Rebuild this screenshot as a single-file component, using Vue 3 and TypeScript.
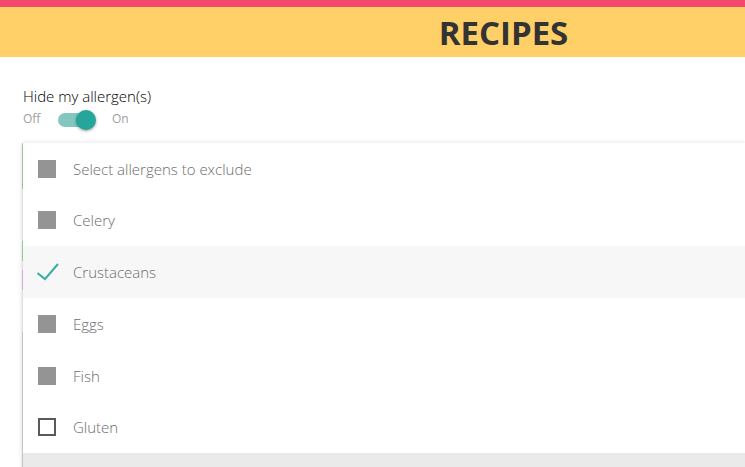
<script setup lang="ts">
import { ref } from 'vue'

interface Allergen {
  id: string
  label: string
  checked: boolean
  disabled: boolean
}

const hideAllergens = ref(true)

const allergens = ref<Allergen[]>([
  { id: 'all', label: 'Select allergens to exclude', checked: false, disabled: true },
  { id: 'celery', label: 'Celery', checked: false, disabled: true },
  { id: 'crustaceans', label: 'Crustaceans', checked: true, disabled: false },
  { id: 'eggs', label: 'Eggs', checked: false, disabled: true },
  { id: 'fish', label: 'Fish', checked: false, disabled: true },
  { id: 'gluten', label: 'Gluten', checked: false, disabled: false },
])
</script>

<template>
  <div class="page">
    <header class="banner">
      <h1>RECIPES</h1>
    </header>

    <main class="content">
      <label class="heading" for="hide-switch">Hide my allergen(s)</label>
      <div class="switch-row">
        <span class="off">Off</span>
        <input id="hide-switch" v-model="hideAllergens" class="switch" type="checkbox" role="switch" />
        <span>On</span>
      </div>

      <section class="results">
        <div class="card search"></div>
        <div class="card tag-green"></div>
        <div class="card tag-pink"></div>
        <div class="card recipe"></div>

        <ul class="menu">
          <li v-for="item in allergens" :key="item.id" :class="{ selected: item.checked }">
            <label class="option" :for="item.id">
              <span class="mark">
                <input :id="item.id" v-model="item.checked" type="checkbox" :disabled="item.disabled" />
                <svg v-if="item.checked" class="tick" viewBox="0 0 24 20" aria-hidden="true">
                  <path d="M0.5 11 L8 17 L21 2" />
                </svg>
              </span>
              <span>{{ item.label }}</span>
            </label>
          </li>
          <li class="next"></li>
        </ul>
      </section>
    </main>
  </div>
</template>

<style>
body {
  background: #fff;
}
</style>

<style scoped>
.page {
  height: 100vh;
  overflow: hidden;
  display: flex;
  flex-direction: column;
  font-family: "Open Sans", "Noto Sans", sans-serif;
  font-weight: 300;
}

.banner {
  box-sizing: border-box;
  flex: none;
  border-top: 7px solid #f2476f;
  background: #ffd067;
  padding: 2px 0 0 262px;
  text-align: center;
}

h1 {
  margin: 0;
  font-size: 33px;
  line-height: 48px;
  font-weight: 700;
  color: #333;
}

.content {
  flex: 1;
  display: flex;
  flex-direction: column;
  padding: 28px 0 0 22px;
}

.heading {
  padding-left: 1px;
  font-size: 15px;
  line-height: 22px;
  color: #000;
}

.switch-row {
  display: flex;
  align-items: center;
  height: 20px;
  margin-top: 2px;
  padding-left: 1px;
  font-size: 12px;
  font-weight: 400;
  line-height: 20px;
  color: #9e9e9e;
}

.off {
  width: 35px;
}

.switch {
  appearance: none;
  position: relative;
  width: 36px;
  height: 14px;
  margin: 2px 18px 0 0;
  border-radius: 7px;
  background: #ccc;
}

.switch:checked {
  background: #84c7c1;
}

.switch::before {
  content: "";
  position: absolute;
  top: -3px;
  left: 0;
  width: 20px;
  height: 20px;
  border-radius: 50%;
  background: #f1f1f1;
  box-shadow: 0 1px 3px rgba(0, 0, 0, 0.4);
}

.switch:checked::before {
  left: 18px;
  background: #26a69a;
}

.results {
  position: relative;
  flex: 1;
  margin-top: 14px;
}

.card {
  border-left: 1px solid;
}

.search {
  height: 46px;
  border-color: #b4e0b4;
}

.tag-green {
  height: 20px;
  margin-top: 52px;
  border-color: #a4eca4;
}

.tag-pink {
  height: 20px;
  margin-top: 9px;
  border-color: #f6c4f6;
}

.recipe {
  height: 140px;
  margin-top: 42px;
  border-color: #e0e0e0;
}

.menu {
  position: absolute;
  top: 0;
  left: 1px;
  right: 0;
  margin: 0;
  padding: 0;
  list-style: none;
  background: #fff;
  box-shadow:
    0 2px 2px rgba(0, 0, 0, 0.14),
    0 3px 1px -2px rgba(0, 0, 0, 0.12),
    0 1px 5px rgba(0, 0, 0, 0.2);
}

.menu li {
  height: 52px;
}

.menu li:nth-child(4n + 1) {
  height: 51px;
}

.menu .selected {
  background: #f7f7f7;
}

.menu .next {
  background: #eaeaea;
}

.option {
  display: flex;
  align-items: center;
  height: 100%;
  padding-left: 14px;
  font-size: 15px;
  line-height: 22px;
  color: #6c6c6c;
}

.mark {
  display: flex;
  align-items: center;
  width: 36px;
}

.mark input {
  appearance: none;
  box-sizing: border-box;
  width: 18px;
  height: 18px;
  margin: 0 0 0 1px;
  border: 2px solid #5a5a5a;
}

.mark input:disabled {
  border: 0;
  background: #949494;
}

.mark input:checked {
  width: 0;
  margin: 0;
  border: 0;
}

.tick {
  width: 24px;
  height: 20px;
  fill: none;
  stroke: #3aaea3;
  stroke-width: 2;
}
</style>
